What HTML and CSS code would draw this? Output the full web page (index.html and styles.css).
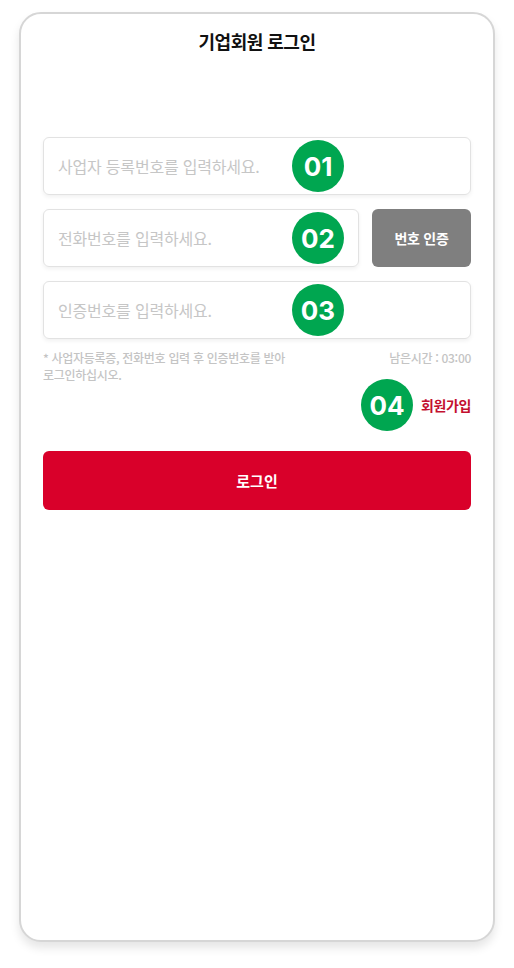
FILE: index.html
```html
<!DOCTYPE html>
<html lang="ko">
<head>
<meta charset="utf-8">
<link rel="stylesheet" href="styles.css">
</head>
<body>
<div class="frame">
  <h1 class="title">기업회원 로그인</h1>
  <div class="form">
    <div class="field">
      <div class="input">사업자 등록번호를 입력하세요.</div>
      <span class="badge">01</span>
    </div>
    <div class="row">
      <div class="field grow">
        <div class="input">전화번호를 입력하세요.</div>
        <span class="badge">02</span>
      </div>
      <button class="verify">번호 인증</button>
    </div>
    <div class="field">
      <div class="input">인증번호를 입력하세요.</div>
      <span class="badge">03</span>
    </div>
    <div class="notice">
      <p class="note">* 사업자등록증, 전화번호 입력 후 인증번호를 받아<br>로그인하십시오.</p>
      <span class="timer">남은시간 : 03:00</span>
    </div>
    <div class="join-row">
      <span class="badge badge-inline">04</span>
      <a class="join">회원가입</a>
    </div>
    <button class="login">로그인</button>
  </div>
</div>
</body>
</html>
```
FILE: styles.css
```css
* { box-sizing: border-box; }
html, body { margin: 0; padding: 0; background: #fff; }
body {
  font-family: "Noto Sans CJK KR", "Noto Sans", sans-serif;
  width: 514px;
  height: 968px;
  overflow: hidden;
}
.frame {
  margin: 12px 0 0 19px;
  width: 476px;
  height: 930px;
  border: 2px solid #d6d6d6;
  border-radius: 22px;
  box-shadow: 0 6px 10px rgba(0,0,0,0.10);
  padding: 0 22px;
  background: #fff;
}
.title {
  margin: 14px 0 0;
  font-size: 18px;
  line-height: 26px;
  font-weight: 700;
  text-align: center;
  color: #111;
  letter-spacing: -0.5px;
}
.form {
  margin-top: 83px;
  display: flex;
  flex-direction: column;
}
.field { position: relative; }
.grow { flex: 1; }
.row { display: flex; gap: 13px; margin-top: 14px; }
.row + .field { margin-top: 14px; }
.input {
  height: 58px;
  border: 1px solid #e2e2e2;
  border-radius: 6px;
  box-shadow: 0 2px 4px rgba(0,0,0,0.06);
  padding: 0 14px;
  display: flex;
  align-items: center;
  font-size: 16px;
  color: #c6c6c6;
  letter-spacing: -0.2px;
}
.badge {
  position: absolute;
  left: 249px;
  top: 3px;
  width: 52px;
  height: 52px;
  border-radius: 50%;
  background: #00a650;
  color: #fff;
  font-family: "Inter", "Noto Sans", sans-serif;
  font-weight: 700;
  font-size: 26px;
  display: flex;
  align-items: center;
  justify-content: center;
  letter-spacing: 0;
}
.badge-inline { position: static; }
.verify {
  width: 99px;
  height: 58px;
  border: 0;
  border-radius: 6px;
  background: #7f7f7f;
  color: #fff;
  font-family: "Noto Sans CJK KR", sans-serif;
  font-weight: 700;
  font-size: 14px;
  letter-spacing: -0.3px;
}
.notice {
  display: flex;
  justify-content: space-between;
  margin-top: 10px;
  font-size: 12px;
  line-height: 17px;
  color: #c4c4c4;
  font-weight: 500;
  letter-spacing: -0.3px;
}
.note { margin: 0; }
.join-row {
  display: flex;
  justify-content: flex-end;
  align-items: center;
  gap: 8px;
  margin-top: -4px;
}
.join {
  color: #c3102f;
  font-weight: 700;
  font-size: 14px;
  letter-spacing: -0.4px;
}
.login {
  margin-top: 20px;
  height: 59px;
  border: 0;
  border-radius: 6px;
  background: #d9002a;
  color: #fff;
  font-family: "Noto Sans CJK KR", sans-serif;
  font-weight: 700;
  font-size: 15px;
}
```
